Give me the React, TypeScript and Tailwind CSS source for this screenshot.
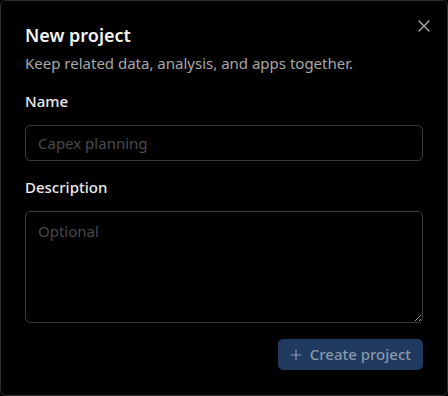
import { Plus, X } from "lucide-react";

export default function App() {
  return (
    <div
      className="w-[448px] h-[396px] bg-black"
      style={{ fontFamily: '"Noto Sans", "Open Sans", sans-serif' }}
    >
      <div className="relative h-full rounded-md border border-[#2e2e2e] bg-black px-6 pt-5">
        <button className="absolute right-[13px] top-[15px] text-[#b5b5b5]">
          <X className="w-5 h-5" strokeWidth={1.5} />
        </button>

        <h2 className="text-[18px] leading-7 font-semibold text-[#f4f4f4]">New project</h2>
        <p className="mt-[2px] text-[15px] leading-6 text-[#a8a8a8]">
          Keep related data, analysis, and apps together.
        </p>

        <div className="mt-[14px]">
          <label className="block text-[15px] leading-6 font-medium text-[#ececec]">Name</label>
          <input
            placeholder="Capex planning"
            className="mt-3 block w-full h-9 rounded-[5px] border border-[#3a3a3a] bg-black px-3 text-[15px] text-[#e5e5e5] placeholder:text-[#4a4a4a] outline-none"
          />
        </div>

        <div className="mt-[14px]">
          <label className="block text-[15px] leading-6 font-medium text-[#ececec]">Description</label>
          <textarea
            placeholder="Optional"
            className="mt-3 block w-full h-[112px] rounded-[5px] border border-[#3a3a3a] bg-black px-3 py-2 text-[15px] text-[#e5e5e5] placeholder:text-[#4a4a4a] outline-none"
          />
        </div>

        <div className="mt-4 flex justify-end">
          <button className="flex items-center gap-1.5 h-[31px] rounded-[5px] bg-[#1f3a5e] pl-2.5 pr-3 text-[15px] font-medium text-[#8797ad]">
            <Plus className="w-4 h-4" strokeWidth={1.75} />
            Create project
          </button>
        </div>
      </div>
    </div>
  );
}
